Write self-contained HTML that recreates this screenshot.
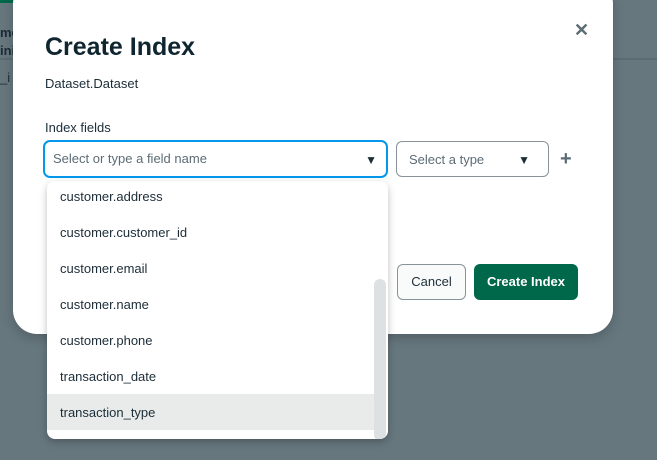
<!DOCTYPE html>
<html><head><style>
*{margin:0;padding:0;box-sizing:border-box}
body{width:657px;height:460px;overflow:hidden;background:#66777e;font-family:"Liberation Sans",sans-serif;position:relative;color:#1c2d38}
.a{position:absolute}
</style></head><body>
<div class="a" style="left:0;top:0;width:16px;height:3px;background:#00684a"></div>
<div class="a" style="left:0;top:24px;font-size:13px;font-weight:bold;color:#1c2d38;line-height:18px">me<br>ini</div>
<div class="a" style="left:0;top:58px;width:657px;height:2px;background:#5c6c73"></div>
<div class="a" style="left:0;top:70px;font-size:13px;color:#1c2d38">_i</div>
<div class="a" style="left:13px;top:-20px;width:600px;height:354px;background:#fff;border-radius:24px;box-shadow:0 4px 12px rgba(0,0,0,.2)"></div>
<div class="a" style="left:574px;top:20px;font-size:18px;font-weight:bold;color:#5c6c75">✕</div>
<div class="a" style="left:45px;top:33px;font-size:25px;font-weight:bold;color:#0f2530">Create Index</div>
<div class="a" style="left:45px;top:76px;font-size:13px;color:#1c2d38">Dataset.Dataset</div>
<div class="a" style="left:45px;top:120px;font-size:13px;color:#1c2d38">Index fields</div>
<div class="a" style="left:43px;top:140px;width:345px;height:38px;border:2px solid #0498ec;border-radius:7px;font-size:13px;color:#5c6c75;padding:9px 8px">Select or type a field name<span class="a" style="right:9px;top:11px;font-size:12px;color:#1c2d38">▼</span></div>
<div class="a" style="left:396px;top:141px;width:153px;height:36px;border:1px solid #889397;border-radius:6px;font-size:13px;color:#5c6c75;padding:10px 12px">Select a type<span class="a" style="right:18px;top:11px;font-size:12px;color:#1c2d38">▼</span></div>
<div class="a" style="left:560px;top:148px;font-size:20px;font-weight:bold;color:#5c6c75">+</div>
<div class="a" style="left:397px;top:264px;width:69px;height:36px;border:1px solid #889397;border-radius:6px;background:#f9fbfa;font-size:13px;text-align:center;line-height:34px">Cancel</div>
<div class="a" style="left:474px;top:264px;width:104px;height:36px;border-radius:6px;background:#00684a;color:#fff;font-size:13px;font-weight:bold;text-align:center;line-height:36px">Create Index</div>
<div class="a" style="left:47px;top:181px;width:341px;height:258px;background:#fff;border-radius:8px;box-shadow:0 3px 8px rgba(0,0,0,.25);overflow:hidden;font-size:13px;color:#1c2d38">
<div class="a" style="left:0;top:213px;width:329px;height:36px;background:#e8ebea"></div>
<div class="a" style="left:327px;top:98px;width:12px;height:162px;background:#dde1e2;border-radius:6px"></div>
<div class="a" style="left:13px;top:8px">customer.address</div>
<div class="a" style="left:13px;top:44px">customer.customer_id</div>
<div class="a" style="left:13px;top:80px">customer.email</div>
<div class="a" style="left:13px;top:116px">customer.name</div>
<div class="a" style="left:13px;top:152px">customer.phone</div>
<div class="a" style="left:13px;top:188px">transaction_date</div>
<div class="a" style="left:13px;top:224px">transaction_type</div>
</div>
</body></html>
